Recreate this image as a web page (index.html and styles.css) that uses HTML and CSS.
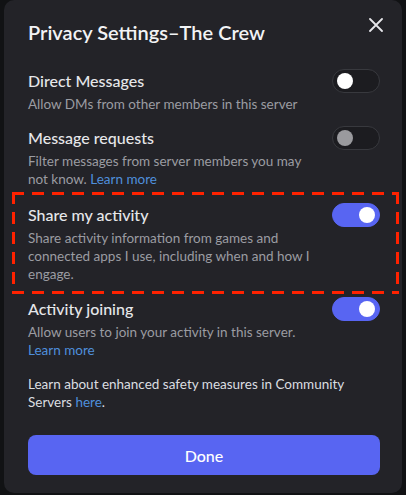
FILE: index.html
```html
<!DOCTYPE html>
<html lang="en">
  <head>
    <meta charset="UTF-8" />
    <meta name="viewport" content="width=device-width, initial-scale=1.0" />
    <title>Privacy Settings</title>
    <link rel="stylesheet" href="styles.css">
  </head>
  <body>
    <div class="modal">
      <div class="header">
        <h1 class="title">Privacy Settings–The Crew</h1>
        <button class="close" aria-label="Close">
          <svg width="14" height="14" viewBox="0 0 14 14">
            <path d="M1 1L13 13M13 1L1 13" stroke="#e6e6ea" stroke-width="1.8" stroke-linecap="round" />
          </svg>
        </button>
      </div>

      <div class="row">
        <div class="text">
          <div class="label">Direct Messages</div>
          <div class="desc">Allow DMs from other members in this server</div>
        </div>
        <span class="switch"><span class="knob"></span></span>
      </div>

      <div class="row">
        <div class="text">
          <div class="label">Message requests</div>
          <div class="desc">Filter messages from server members you may not know. <a href="#">Learn more</a></div>
        </div>
        <span class="switch disabled"><span class="knob"></span></span>
      </div>

      <div class="row marked">
        <div class="text">
          <div class="label">Share my activity</div>
          <div class="desc">Share activity information from games and connected apps I use, including when and how I engage.</div>
        </div>
        <span class="switch on"><span class="knob"></span></span>
      </div>

      <div class="row">
        <div class="text">
          <div class="label">Activity joining</div>
          <div class="desc">Allow users to join your activity in this server.<br><a href="#">Learn more</a></div>
        </div>
        <span class="switch on"><span class="knob"></span></span>
      </div>

      <p class="note">Learn about enhanced safety measures in Community Servers <a href="#">here</a>.</p>

      <button class="done">Done</button>
    </div>
  </body>
</html>
```

FILE: styles.css
```css
* {
  padding: 0;
  margin: 0;
  box-sizing: border-box;
}
body {
  background-color: #111214;
  font-family: Lato, "Noto Sans", sans-serif;
  width: 406px;
  height: 495px;
  overflow: hidden;
}
.modal {
  width: 398px;
  margin-left: 4px;
  background-color: #232328;
  border-radius: 10px;
  padding: 18px 22px 18px 24px;
}
.header {
  display: flex;
  justify-content: space-between;
  align-items: flex-start;
}
.title {
  color: #f2f3f5;
  font-size: 20px;
  font-weight: 600;
  line-height: 28px;
}
.close {
  background: none;
  border: none;
  width: 14px;
  height: 14px;
  margin-top: 0;
  margin-right: -3px;
  display: flex;
}
.row {
  display: flex;
  align-items: flex-start;
  gap: 16px;
  margin-top: 14px;
}
.header + .row {
  margin-top: 24px;
}
.text {
  flex: 1;
}
.label {
  color: #e6e7ea;
  font-size: 16px;
  font-weight: 500;
  line-height: 22px;
}
.desc {
  color: #9b9ca2;
  font-size: 13.5px;
  line-height: 18px;
  margin-top: 3px;
}
a {
  color: #4f8fdc;
  text-decoration: none;
}
/* red dashed highlight round one row */
.marked {
  --dash: #ff2200 0 12px, transparent 12px 20px;
  background:
    repeating-linear-gradient(90deg, var(--dash)) left top / 100% 3px no-repeat,
    repeating-linear-gradient(90deg, var(--dash)) left bottom / 100% 3px no-repeat,
    repeating-linear-gradient(180deg, var(--dash)) left top / 3px 100% no-repeat,
    repeating-linear-gradient(180deg, var(--dash)) right top / 3px 100% no-repeat;
  margin-left: -16px;
  margin-right: -19px;
  padding: 12px 19px 11px 16px;
  margin-top: 4px;
}
.marked + .row {
  margin-top: 4px;
}
.switch {
  width: 48px;
  height: 24px;
  border-radius: 12px;
  background-color: #1c1c20;
  border: 1px solid #38393e;
  display: flex;
  align-items: center;
  padding: 0 4px;
  flex-shrink: 0;
  margin-top: -1px;
}
.knob {
  width: 16px;
  height: 16px;
  border-radius: 50%;
  background-color: #ffffff;
}
.switch.disabled .knob {
  background-color: #9a9a9e;
}
.switch.on {
  background-color: #5865f2;
  border-color: #5865f2;
  justify-content: flex-end;
}
.note {
  color: #dbdee1;
  font-size: 13.5px;
  line-height: 18px;
  margin-top: 16px;
}
.done {
  display: block;
  width: 100%;
  height: 40px;
  margin-top: 24px;
  border: none;
  border-radius: 8px;
  background-color: #5865f2;
  color: #ffffff;
  font-family: Lato, "Noto Sans", sans-serif;
  font-size: 16px;
  font-weight: 500;
}
```
